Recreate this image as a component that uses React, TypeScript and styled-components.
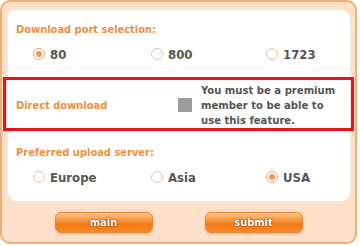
import React from "react";
import styled, { createGlobalStyle } from "styled-components";

const GlobalStyle = createGlobalStyle`
  html, body { margin: 0; padding: 0; background: #ffffff; }
  body { font-family: "DejaVu Sans Condensed", "DejaVu Sans", sans-serif; }
`;

const Frame = styled.div`
  position: relative;
  box-sizing: border-box;
  width: 357px;
  height: 244px;
  margin: 0;
  border: 2px solid #f4ad74;
  border-radius: 10px;
  background: #fde0ca;
  padding: 8px 5px 0 6px;
  display: flex;
  flex-direction: column;
`;

const Panel = styled.div`
  box-sizing: border-box;
  width: 342px;
  height: 191px;
  background: #ffffff;
  border-radius: 9px;
  box-shadow: 0 0 2px 1px #fbe9db;
  padding: 12px 0 0 8px;
  display: flex;
  flex-direction: column;
`;

const Heading = styled.div`
  color: #ef8f3d;
  font-weight: bold;
  font-size: 11px;
  line-height: 16px;
  height: 16px;
`;

const RadioRow = styled.div<{ $top: number }>`
  margin-top: ${(p) => p.$top}px;
  height: 20px;
  display: grid;
  grid-template-columns: 118px 115px 90px;
  padding-left: 17px;
  align-items: center;
`;

const Option = styled.label`
  display: flex;
  align-items: center;
  gap: 5px;
  color: #555555;
  font-weight: bold;
  font-size: 13px;
`;

const Radio = styled.span<{ $checked?: boolean }>`
  box-sizing: border-box;
  width: 12px;
  height: 12px;
  border-radius: 50%;
  border: 1px solid ${(p) => (p.$checked ? "#f2a26a" : "#e2c2a6")};
  background: #ffffff;
  display: flex;
  align-items: center;
  justify-content: center;
  &::after {
    content: "";
    width: 6px;
    height: 6px;
    border-radius: 50%;
    background: ${(p) => (p.$checked ? "#f39a58" : "transparent")};
  }
`;

const DirectRow = styled.div`
  margin-top: 18px;
  height: 46px;
  display: grid;
  grid-template-columns: 162px 23px 1fr;
  align-items: center;
`;

const Label = styled.div`
  color: #ef8f3d;
  font-weight: bold;
  font-size: 11px;
`;

const Box = styled.span`
  width: 14px;
  height: 14px;
  background: #9c9c9c;
`;

const Note = styled.div`
  color: #555555;
  font-weight: bold;
  font-size: 11.2px;
  line-height: 15px;
`;

const Section = styled.div`
  margin-top: 17px;
`;

const Annotation = styled.div`
  position: absolute;
  left: 1px;
  top: 75px;
  width: 351px;
  height: 54px;
  box-sizing: border-box;
  border: 3px solid #e3141e;
  pointer-events: none;
`;

const Buttons = styled.div`
  display: flex;
  justify-content: center;
  gap: 52px;
  margin-top: 11px;
  padding-right: 1px;
`;

const Button = styled.button`
  box-sizing: border-box;
  width: 98px;
  height: 21px;
  border: 1px solid #e9873a;
  border-radius: 6px;
  background: linear-gradient(#ffc48a 0%, #f99a45 35%, #f27a14 60%, #f58a2a 100%);
  box-shadow: 0 1px 2px rgba(170, 90, 30, 0.35);
  color: #ffffff;
  font-family: "DejaVu Sans Condensed", "DejaVu Sans", sans-serif;
  font-weight: bold;
  font-size: 11px;
  text-shadow: 0 0 2px #7a3300, 0 0 1px #7a3300;
  padding: 0;
`;

export default function App() {
  return (
    <>
      <GlobalStyle />
      <Frame>
        <Panel>
          <Heading>Download port selection:</Heading>
          <RadioRow $top={6}>
            <Option><Radio $checked />80</Option>
            <Option><Radio />800</Option>
            <Option><Radio />1723</Option>
          </RadioRow>
          <DirectRow>
            <Label>Direct download</Label>
            <Box />
            <Note>
              You must be a premium
              <br />
              member to be able to
              <br />
              use this feature.
            </Note>
          </DirectRow>
          <Section>
            <Heading>Preferred upload server:</Heading>
            <RadioRow $top={6}>
              <Option><Radio />Europe</Option>
              <Option><Radio />Asia</Option>
              <Option><Radio $checked />USA</Option>
            </RadioRow>
          </Section>
        </Panel>
        <Buttons>
          <Button>main</Button>
          <Button>submit</Button>
        </Buttons>
        <Annotation />
      </Frame>
    </>
  );
}
